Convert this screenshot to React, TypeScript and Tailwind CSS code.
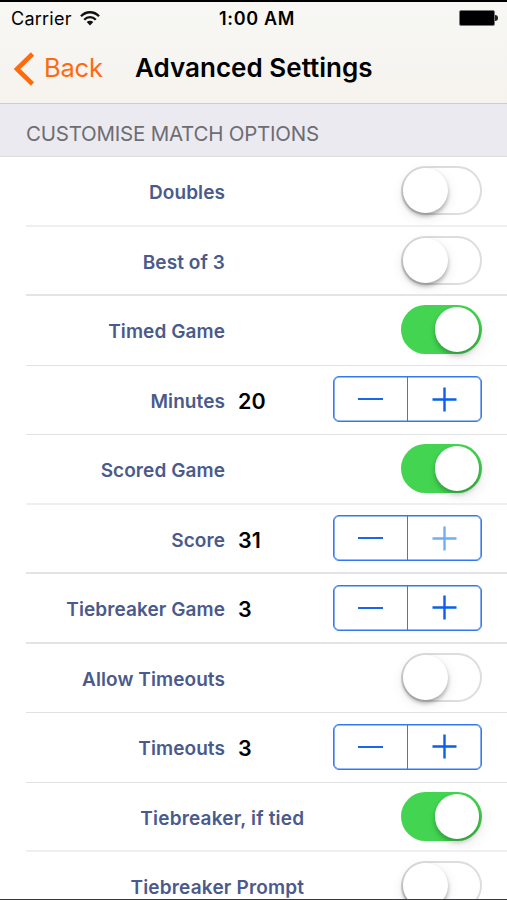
type RowData = {
  label: string;
  kind: "switch" | "stepper";
  on?: boolean;
  value?: string;
  wide?: boolean;
  plusDisabled?: boolean;
  line: string;
};

const thin = "h-[1px] bg-[#e2e2e4]";
const soft = "h-[2px] bg-[#efeff0]";
const thick = "h-[2px] bg-[#e4e4e6]";

const rows: RowData[] = [
  { label: "Doubles", kind: "switch", line: soft },
  { label: "Best of 3", kind: "switch", line: thick },
  { label: "Timed Game", kind: "switch", on: true, line: thin },
  { label: "Minutes", kind: "stepper", value: "20", line: thin },
  { label: "Scored Game", kind: "switch", on: true, line: soft },
  { label: "Score", kind: "stepper", value: "31", plusDisabled: true, line: thick },
  { label: "Tiebreaker Game", kind: "stepper", value: "3", line: thick },
  { label: "Allow Timeouts", kind: "switch", line: thin },
  { label: "Timeouts", kind: "stepper", value: "3", line: thin },
  { label: "Tiebreaker, if tied", kind: "switch", on: true, wide: true, line: soft },
  { label: "Tiebreaker Prompt", kind: "switch", wide: true, line: thin },
];

function Switch({ on }: { on?: boolean }) {
  return on ? (
    <div className="mt-[9px] flex h-[49px] w-[81px] justify-end rounded-full bg-[#43d551] p-[2px] pr-[3px]">
      <div className="h-[45px] w-[44px] rounded-full bg-white shadow-[0_3px_5px_rgba(0,0,0,0.25),4px_6px_14px_rgba(0,0,0,0.07)]" />
    </div>
  ) : (
    <div className="mt-[9px] flex h-[49px] w-[81px] rounded-full border-2 border-[#dddddd] bg-white">
      <div className="h-[45px] w-[45px] rounded-full bg-white shadow-[0_3px_4px_rgba(0,0,0,0.3),0_4px_14px_rgba(0,0,0,0.09)]" />
    </div>
  );
}

function Stepper({ plusDisabled }: { plusDisabled?: boolean }) {
  return (
    <div className="mt-[10.5px] flex h-[46px] w-[149px] rounded-[6px] border border-[#3478f0] shadow-[inset_0_0_0_0.6px_#3478f0]">
      <div className="flex flex-1 items-center justify-center border-r border-[#3478f0]">
        <div className="h-[2px] w-[25px] bg-[#1a68ea]" />
      </div>
      <div className="flex flex-1 items-center justify-center">
        <svg
          width="25"
          height="25"
          viewBox="0 0 25 25"
          className={plusDisabled ? "mr-px text-[#73adf5]" : "mr-px text-[#0b5fe8]"}
        >
          <path d="M0.5 12.5H24.5M12.5 0.5V24.5" stroke="currentColor" strokeWidth="2.4" />
        </svg>
      </div>
    </div>
  );
}

function Row({ row }: { row: RowData }) {
  return (
    <div className="flex h-[69.56px] shrink-0 flex-col pl-[26px]">
      <div className="flex min-h-0 flex-1 items-start pr-[25px]">
        <div
          className={`${row.wide ? "w-[278.2px] tracking-[0.18px]" : "w-[199px] tracking-[0.08px]"} shrink-0 pt-[22px] text-right text-[19px] leading-7 font-semibold whitespace-nowrap text-[#4a5a8c]`}
        >
          {row.label}
        </div>
        <div className="flex-1 pt-[21px] pl-[13px] text-[21.5px] leading-7 font-semibold text-black">
          {row.value}
        </div>
        {row.kind === "switch" ? <Switch on={row.on} /> : <Stepper plusDisabled={row.plusDisabled} />}
      </div>
      <div className={`${row.line} shrink-0`} />
    </div>
  );
}

export default function App() {
  return (
    <div className="relative flex h-[900px] w-[507px] flex-col overflow-hidden bg-white font-['Inter','Liberation_Sans',sans-serif]">
      <header className="h-[104px] shrink-0 border-t-2 border-b border-t-black border-b-[#cfcdcc] bg-linear-to-b from-[#f7f7f4] to-[#f6f3ee]">
        <div className="grid h-8 grid-cols-[1fr_auto_1fr] items-center pr-[9px] pl-[11px] text-[18px] text-black">
          <div className="flex items-center gap-2">
            <span className="tracking-[0.25px]">Carrier</span>
            <svg width="20" height="15" viewBox="0 0 20 15" fill="none" stroke="#111" strokeWidth="2.3">
              <path d="M1 5.3C6-0.1 14-0.1 19 5.3" />
              <path d="M4.2 8.7C7.5 5.2 12.5 5.2 15.8 8.7" />
              <path d="M10 14.5L6.7 11.1C8.6 9.3 11.4 9.3 13.3 11.1Z" fill="#111" stroke="none" />
            </svg>
          </div>
          <span className="pl-[5px] font-semibold tracking-[0.7px]">1:00 AM</span>
          <div className="flex items-center justify-end">
            <div className="h-4 w-9 rounded-[2px] border border-[#777] bg-black" />
            <div className="h-[6px] w-[3px] rounded-r-full bg-[#222]" />
          </div>
        </div>
        <div className="flex h-[69px] items-center pl-[14px]">
          <svg width="21" height="34" viewBox="0 0 21 34" fill="none">
            <path d="M18.5 2L3 17L18.5 32" stroke="#ff6a0d" strokeWidth="4.6" />
          </svg>
          <span className="ml-[9px] w-[91px] text-[25.5px] tracking-[-0.2px] text-[#ff6a0d]">Back</span>
          <h1 className="pb-[2px] text-[26px] font-semibold tracking-[0.02px] whitespace-nowrap text-black">
            Advanced Settings
          </h1>
        </div>
      </header>
      <div className="flex h-[53px] shrink-0 items-center border-b border-[#dcdce0] bg-[#ebeaf1] pt-2 pl-[26px] text-[20.5px] tracking-[-0.23px] text-[#6d6d72]">
        CUSTOMISE MATCH OPTIONS
      </div>
      <main className="flex min-h-0 flex-1 flex-col">
        {rows.map((row) => (
          <Row key={row.label} row={row} />
        ))}
      </main>
      <div className="absolute inset-x-0 bottom-0 h-px bg-[#39393b]" />
    </div>
  );
}
